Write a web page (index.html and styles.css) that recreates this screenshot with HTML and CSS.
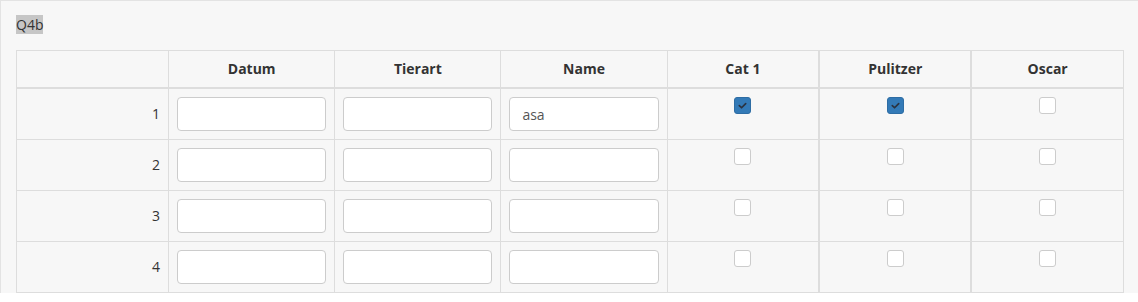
FILE: index.html
```html
<!DOCTYPE html>
<html>
<head>
<meta charset="utf-8">
<link rel="stylesheet" href="styles.css">
</head>
<body>
<div class="panel">
  <div class="title"><span class="sel">Q4b</span></div>
  <table class="grid">
    <colgroup>
      <col class="c-label"><col class="c-text"><col class="c-text"><col class="c-text"><col class="c-chk"><col class="c-chk"><col class="c-chk">
    </colgroup>
    <thead>
      <tr>
        <th></th><th>Datum</th><th>Tierart</th><th>Name</th><th>Cat 1</th><th class="thick">Pulitzer</th><th class="thick">Oscar</th>
      </tr>
    </thead>
    <tbody>
      <tr>
        <td class="num">1</td>
        <td><input class="field" type="text"></td>
        <td><input class="field" type="text"></td>
        <td><input class="field" type="text" value="asa"></td>
        <td class="chk"><span class="box on"><svg viewBox="0 0 16 16" width="16" height="16"><path d="M4.6 8.2 L7 10.4 L11.4 6" fill="none" stroke="#2b3340" stroke-width="1.8" stroke-linecap="round" stroke-linejoin="round"/></svg></span></td>
        <td class="chk thick"><span class="box on"><svg viewBox="0 0 16 16" width="16" height="16"><path d="M4.6 8.2 L7 10.4 L11.4 6" fill="none" stroke="#2b3340" stroke-width="1.8" stroke-linecap="round" stroke-linejoin="round"/></svg></span></td>
        <td class="chk thick"><span class="box"></span></td>
      </tr>
      <tr>
        <td class="num">2</td>
        <td><input class="field" type="text"></td>
        <td><input class="field" type="text"></td>
        <td><input class="field" type="text"></td>
        <td class="chk"><span class="box"></span></td>
        <td class="chk thick"><span class="box"></span></td>
        <td class="chk thick"><span class="box"></span></td>
      </tr>
      <tr>
        <td class="num">3</td>
        <td><input class="field" type="text"></td>
        <td><input class="field" type="text"></td>
        <td><input class="field" type="text"></td>
        <td class="chk"><span class="box"></span></td>
        <td class="chk thick"><span class="box"></span></td>
        <td class="chk thick"><span class="box"></span></td>
      </tr>
      <tr>
        <td class="num">4</td>
        <td><input class="field" type="text"></td>
        <td><input class="field" type="text"></td>
        <td><input class="field" type="text"></td>
        <td class="chk"><span class="box"></span></td>
        <td class="chk thick"><span class="box"></span></td>
        <td class="chk thick"><span class="box"></span></td>
      </tr>
    </tbody>
  </table>
</div>
</body>
</html>
```
FILE: styles.css
```css
html, body {
  margin: 0;
  padding: 0;
  background: #ffffff;
}
body {
  font-family: "Open Sans", "Liberation Sans", sans-serif;
  font-size: 14px;
  line-height: 20px;
  color: #333333;
}
.panel {
  background: #f7f7f7;
  border-top: 1px solid #e3e3e3;
  border-left: 1px solid #e3e3e3;
  padding: 14px 14px 0 15px;
}
.title {
  height: 20px;
  margin-bottom: 15px;
}
.sel {
  background: #c6c6c6;
  color: #333;
  padding: 0;
}
.grid {
  width: 1108px;
  table-layout: fixed;
  border-collapse: collapse;
}
.c-label { width: 152px; }
.c-text { width: 166px; }
.c-chk { width: 152px; }
.grid th, .grid td {
  border: 1px solid #dddddd;
  padding: 8px;
}
.grid th {
  font-weight: bold;
  text-align: center;
  border-bottom-width: 2px;
  height: 20px;
}
.grid td {
  vertical-align: top;
}
.grid .thick {
  border-left-width: 2px;
}
.num {
  text-align: right;
  vertical-align: middle !important;
}
.field {
  display: block;
  box-sizing: border-box;
  width: 100%;
  height: 34px;
  margin: 0;
  padding: 6px 12px;
  border: 1px solid #cccccc;
  border-radius: 4px;
  background: #ffffff;
  font-family: "Open Sans", "Liberation Sans", sans-serif;
  font-size: 14px;
  color: #555555;
  outline: none;
}
.chk {
  text-align: center;
}
.box {
  display: inline-block;
  box-sizing: border-box;
  width: 17px;
  height: 17px;
  border: 1px solid #cccccc;
  border-radius: 3px;
  background: #ffffff;
  vertical-align: top;
  position: relative;
}
.box.on {
  background: #337ab7;
  border-color: #2e6da4;
}
.box svg {
  position: absolute;
  left: 0;
  top: 0;
  width: 15px;
  height: 15px;
}
```
